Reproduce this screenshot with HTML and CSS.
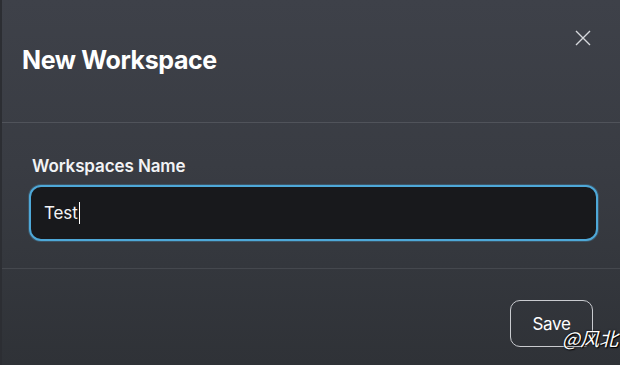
FILE: index.html
```html
<!DOCTYPE html>
<html lang="en">
<head>
    <meta charset="UTF-8">
    <meta name="viewport" content="width=device-width, initial-scale=1.0">
    <title>New Workspace</title>
    <link rel="stylesheet" href="styles.css">
</head>
<body>
    <div class="modal">
        <div class="modal-header">
            <h2 class="modal-title">New Workspace</h2>
            <button class="close-btn" aria-label="Close">
                <svg width="16" height="16" viewBox="0 0 16 16">
                    <path d="M1 1L15 15M15 1L1 15" stroke="#d6d8dc" stroke-width="1.4" fill="none"/>
                </svg>
            </button>
        </div>

        <div class="modal-body">
            <label class="field-label">Workspaces Name</label>
            <div class="field-input">
                <span class="input-text">Test</span><span class="caret"></span>
            </div>
        </div>

        <div class="modal-footer">
            <button class="save-btn">Save</button>
        </div>

        <div class="watermark">@风北</div>
    </div>
</body>
</html>
```

FILE: styles.css
```css
* {
    margin: 0;
    padding: 0;
    box-sizing: border-box;
}

body {
    font-family: Inter, 'Noto Sans', sans-serif;
    background: #2f3238;
    width: 620px;
    height: 365px;
    overflow: hidden;
}

.modal {
    position: relative;
    height: 365px;
    background: linear-gradient(180deg, #3e4149 0%, #393c43 45%, #2f3237 100%);
    border-left: 2px solid #2c2e33;
    color: #ffffff;
}

.modal-header {
    height: 123px;
    display: flex;
    align-items: flex-start;
    justify-content: space-between;
    padding: 45px 29px 0 20px;
    border-bottom: 1px solid #50535a;
}

.modal-title {
    font-size: 25px;
    font-weight: 700;
    letter-spacing: -0.4px;
    color: #ffffff;
}

.close-btn {
    background: none;
    border: none;
    margin-top: -15px;
    padding: 0;
    cursor: pointer;
    display: flex;
}

.modal-body {
    height: 146px;
    padding: 33px 22px 0 27px;
    border-bottom: 1px solid #45484e;
}

.field-label {
    display: block;
    font-size: 17px;
    font-weight: 600;
    letter-spacing: -0.1px;
    color: #f2f3f5;
    margin: 0 0 9px 3px;
}

.field-input {
    height: 56px;
    background: #18191c;
    border: 2px solid #4ea8d8;
    border-radius: 12px;
    box-shadow: 0 0 0 1px rgba(78, 168, 216, 0.25);
    display: flex;
    align-items: center;
    padding-left: 13px;
}

.input-text {
    font-size: 17px;
    letter-spacing: -0.1px;
    color: #f4f4f6;
}

.caret {
    display: inline-block;
    width: 1px;
    height: 22px;
    background: #ffffff;
    margin-left: 1px;
}

.modal-footer {
    display: flex;
    justify-content: flex-end;
    padding: 31px 27px 0 0;
}

.save-btn {
    width: 83px;
    height: 47px;
    background: transparent;
    border: 1px solid #c9cbcf;
    border-radius: 10px;
    color: #ffffff;
    font-family: Inter, 'Noto Sans', sans-serif;
    font-size: 17px;
    letter-spacing: -0.3px;
    cursor: pointer;
}

.watermark {
    position: absolute;
    right: 2px;
    top: 324px;
    font-family: 'Noto Sans CJK SC', sans-serif;
    font-size: 19px;
    font-style: italic;
    color: #ffffff;
    text-shadow: 0 0 2px #000, 1px 1px 1px #000;
}
```
